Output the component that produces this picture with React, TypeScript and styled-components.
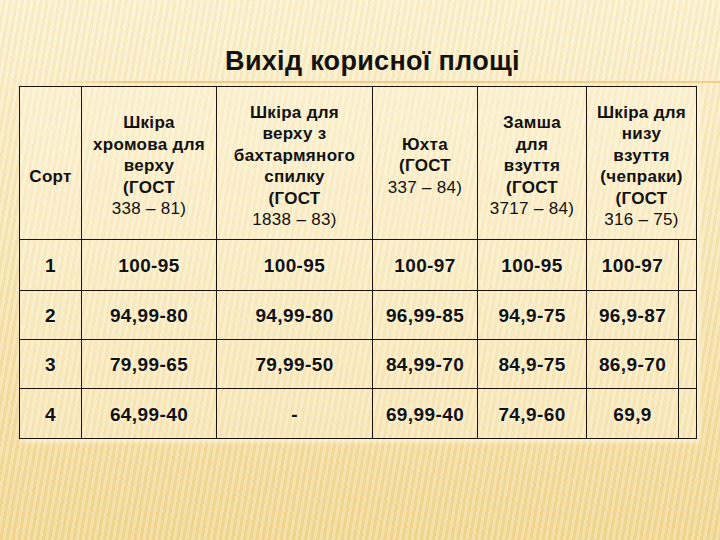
import React from "react";
import styled, { createGlobalStyle } from "styled-components";

const GlobalStyle = createGlobalStyle`
  html, body {
    margin: 0;
    padding: 0;
  }
  body {
    font-family: "Liberation Sans", Arial, sans-serif;
    color: #111;
  }
`;

const Slide = styled.main`
  width: 720px;
  height: 540px;
  overflow: hidden;
  display: flex;
  flex-direction: column;
  background:
    repeating-linear-gradient(
      100deg,
      rgba(255, 255, 255, 0.2) 0px,
      rgba(255, 255, 255, 0.2) 3px,
      rgba(200, 160, 60, 0.07) 3px,
      rgba(200, 160, 60, 0.07) 6px
    ),
    linear-gradient(180deg, #fcf2d0 0%, #f8e7b6 45%, #f2d893 100%);
`;

const Title = styled.h1`
  margin: 0;
  padding: 46px 0 0 25px;
  text-align: center;
  font-size: 27px;
  line-height: 31px;
  font-weight: 700;
  letter-spacing: 0.3px;
  color: #141210;
`;

const Rule = styled.div`
  margin: 4px 0 0 50px;
  height: 2px;
  background: linear-gradient(90deg, rgba(236, 200, 120, 0) 0%, #eecb84 12%, #f0cf8c 100%);
`;

const Table = styled.table`
  margin: 3px 0 0 19px;
  width: 677px;
  table-layout: fixed;
  border-collapse: collapse;
  background: rgba(255, 250, 230, 0.35);
  box-shadow: 3px 3px 4px rgba(255, 252, 235, 0.7);

  td,
  th {
    border: 1px solid #1c140c;
    padding: 0;
    text-align: center;
    vertical-align: middle;
  }
`;

const HeadRow = styled.tr`
  height: 153px;
`;

const HeadCell = styled.th<{ $pushDown?: boolean }>`
  font-size: 17px;
  line-height: 21.5px;
  font-weight: 700;
  letter-spacing: 0.3px;
  padding-top: ${(p) => (p.$pushDown ? "27px" : "6px")} !important;
`;

const Line = styled.span<{ $bold?: boolean }>`
  display: block;
  font-weight: ${(p) => (p.$bold ? 700 : 400)};
`;

const BodyRow = styled.tr<{ $h: number }>`
  height: ${(p) => p.$h}px;
`;

const Value = styled.td`
  font-size: 19px;
  font-weight: 700;
  letter-spacing: 0.4px;
  padding-top: 2px !important;
  text-shadow: 0 0 4px rgba(255, 251, 236, 0.95);
`;

type Head = { words: string[]; code: string };

const heads: Head[] = [
  { words: ["Шкіра", "хромова для", "верху"], code: "338 – 81)" },
  { words: ["Шкіра для", "верху з", "бахтармяного", "спилку"], code: "1838 – 83)" },
  { words: ["Юхта"], code: "337 – 84)" },
  { words: ["Замша", "для", "взуття"], code: "3717 – 84)" },
  { words: ["Шкіра для", "низу", "взуття", "(чепраки)"], code: "316 – 75)" },
];

const rows: { h: number; cells: string[] }[] = [
  { h: 51, cells: ["1", "100-95", "100-95", "100-97", "100-95", "100-97"] },
  { h: 49, cells: ["2", "94,99-80", "94,99-80", "96,99-85", "94,9-75", "96,9-87"] },
  { h: 49, cells: ["3", "79,99-65", "79,99-50", "84,99-70", "84,9-75", "86,9-70"] },
  { h: 50, cells: ["4", "64,99-40", "-", "69,99-40", "74,9-60", "69,9"] },
];

const widths = [62, 135, 156, 105, 109, 92, 18];

export default function App() {
  return (
    <Slide>
      <GlobalStyle />
      <Title>Вихід корисної площі</Title>
      <Rule />
      <Table>
        <colgroup>
          {widths.map((w, i) => (
            <col key={i} style={{ width: w }} />
          ))}
        </colgroup>
        <thead>
          <HeadRow>
            <HeadCell $pushDown>Сорт</HeadCell>
            {heads.map((h, i) => (
              <HeadCell key={i} colSpan={i === heads.length - 1 ? 2 : 1}>
                {h.words.map((w) => (
                  <Line key={w} $bold>
                    {w}
                  </Line>
                ))}
                <Line $bold>(ГОСТ</Line>
                <Line>{h.code}</Line>
              </HeadCell>
            ))}
          </HeadRow>
        </thead>
        <tbody>
          {rows.map((r) => (
            <BodyRow key={r.cells[0]} $h={r.h}>
              {r.cells.map((c, i) => (
                <Value key={i}>{c}</Value>
              ))}
              <Value />
            </BodyRow>
          ))}
        </tbody>
      </Table>
    </Slide>
  );
}
